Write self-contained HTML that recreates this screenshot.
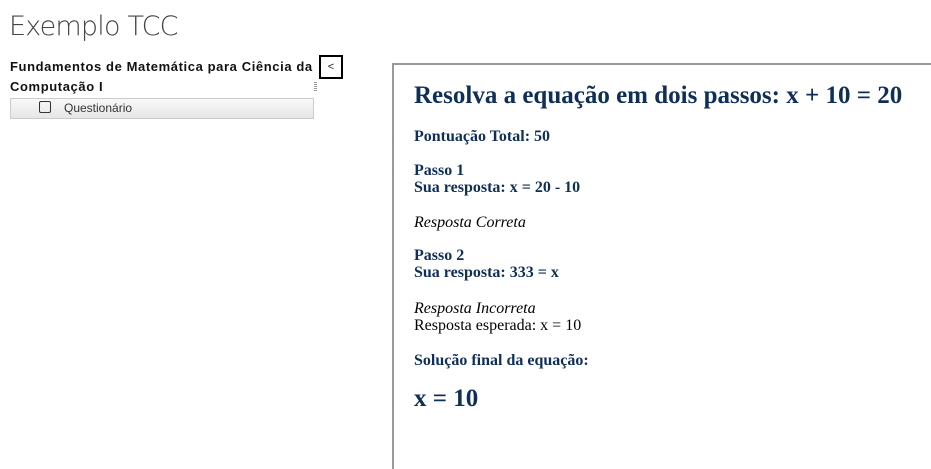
<!DOCTYPE html>
<html><head><meta charset="utf-8"><style>
html,body{margin:0;width:931px;height:469px;overflow:hidden;background:#fff}
body{position:relative;font-family:"Liberation Sans",sans-serif}
.a{position:absolute;white-space:nowrap}
.s{font-family:"Liberation Serif",serif;color:#0f2f57;font-weight:bold;font-size:16px;line-height:17px}
</style></head><body>
<div class="a" style="left:9px;top:11px;font-size:27px;font-weight:200;color:#444;font-family:'DejaVu Sans','Liberation Sans',sans-serif;letter-spacing:-0.8px">Exemplo TCC</div>
<div class="a" style="left:10px;top:57px;font-size:13px;font-weight:bold;line-height:20px;color:#111;letter-spacing:0.6px">Fundamentos de Matemática para Ciência da<br>Computação I</div>
<div class="a" style="left:319px;top:55px;width:20px;height:20px;border:2px solid #000;font-size:11px;line-height:20px;text-align:center;color:#123">&lt;</div>
<div class="a" style="left:314px;top:82px;width:3px;height:10px;background:repeating-linear-gradient(#999 0 1px,#fff 1px 2px)"></div>
<div class="a" style="left:10px;top:98px;width:302px;height:19px;border:1px solid #ccc;background:linear-gradient(#f8f8f8,#e6e6e6)"></div>
<div class="a" style="left:39px;top:101px;width:10px;height:10px;border:1px solid #333;border-radius:2px"></div>
<div class="a" style="left:64px;top:101px;font-size:12px;color:#333">Questionário</div>
<div class="a" style="left:392px;top:63px;width:537px;height:404px;border-left:2px solid #999;border-top:2px solid #999"></div>
<div class="a s" style="left:414px;top:82px;font-size:25px;line-height:28px">Resolva a equação em dois passos: x + 10 = 20</div>
<div class="a s" style="left:414px;top:128px">Pontuação Total: 50</div>
<div class="a s" style="left:414px;top:162px">Passo 1<br>Sua resposta: x = 20 - 10</div>
<div class="a" style="left:414px;top:214px;font-family:'Liberation Serif',serif;font-style:italic;font-size:16px;color:#000">Resposta Correta</div>
<div class="a s" style="left:414px;top:247px">Passo 2<br>Sua resposta: 333 = x</div>
<div class="a" style="left:414px;top:300px;font-family:'Liberation Serif',serif;font-size:16px;line-height:17px;color:#000"><i>Resposta Incorreta</i><br>Resposta esperada: x = 10</div>
<div class="a s" style="left:414px;top:352px">Solução final da equação:</div>
<div class="a s" style="left:414px;top:385px;font-size:25px;line-height:28px">x = 10</div>
</body></html>
